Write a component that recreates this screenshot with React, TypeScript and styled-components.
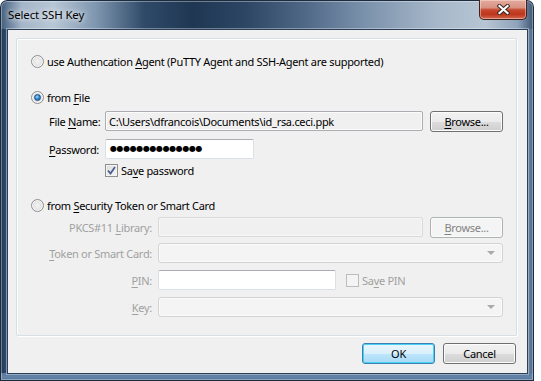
import React from 'react'
import styled, { createGlobalStyle, css } from 'styled-components'

const UI_FONT = `"Noto Sans", "Open Sans", sans-serif`

const GlobalStyle = createGlobalStyle`
  html, body {
    margin: 0;
    padding: 0;
    background: #ffffff;
  }
  body {
    font-family: ${UI_FONT};
    font-size: 11px;
    letter-spacing: -0.3px;
    color: #000;
  }
`

const Window = styled.div`
  width: 534px;
  height: 381px;
  box-sizing: border-box;
  display: flex;
  flex-direction: column;
  padding: 0 6px 7px 7px;
  border-radius: 7px 7px 0 0;
  background:
    linear-gradient(180deg, transparent 373px, #56769a 373px, #6485a8 377px, #4b6a8c 381px),
    linear-gradient(90deg, #1f3654 0, #2c4a6c 6px, transparent 7px, transparent 527px, #6f8aa8 527px, #4a6584 534px) 0 29px / 100% 352px no-repeat,
    linear-gradient(90deg, #3e5a7a 0%, #a3b5c8 4%, #b8c7d6 10%, #7f96b0 18%, #2f4a68 27%, #1f3752 36%, #2c4664 46%, #4f6886 57%, #7a91ab 68%, #a7b8ca 82%, #b7c5d4 91%, #8da2ba 97%, #3a5370 100%);
  box-shadow: inset 0 0 0 1px #1c2b3d, inset 0 0 0 2px rgba(255, 255, 255, 0.35);
`

const TitleBar = styled.div`
  height: 29px;
  flex-shrink: 0;
  display: flex;
  align-items: flex-start;
`

const Title = styled.span`
  padding: 7px 0 0 1px;
  font-size: 11.5px;
  line-height: 15px;
  letter-spacing: -0.15px;
  text-shadow: 0 0 5px rgba(255, 255, 255, 0.9), 0 0 10px rgba(255, 255, 255, 0.6);
`

const CloseButton = styled.div`
  margin-left: auto;
  margin-right: 1px;
  width: 48px;
  height: 20px;
  box-sizing: border-box;
  border: 1px solid #40231e;
  border-top: none;
  border-radius: 0 0 5px 5px;
  background: linear-gradient(180deg, #e4ab9f 0%, #d89282 40%, #c6482f 52%, #bd351c 75%, #d2694f 100%);
  box-shadow: inset 0 0 0 1px rgba(255, 230, 220, 0.45);
  display: flex;
  align-items: center;
  justify-content: center;
`

const Client = styled.div`
  flex: 1;
  display: flex;
  flex-direction: column;
  border: 1px solid #2b4058;
  background: #f0f0f0;
  box-shadow: 0 0 0 1px rgba(255, 255, 255, 0.35);
`

const Panel = styled.div`
  margin: 8px 10px 0 8px;
  height: 298px;
  box-sizing: border-box;
  padding: 12px 13px 0 14px;
  border: 1px solid #d5dfe5;
  border-radius: 2px;
  box-shadow: inset 1px 1px 0 #fff, 1px 1px 0 #fff;
  display: flex;
  flex-direction: column;
`

const Row = styled.div<{ $top: number; $indent?: number }>`
  height: 20px;
  margin-top: ${p => p.$top}px;
  padding-left: ${p => p.$indent ?? 0}px;
  display: flex;
  align-items: center;
  flex-shrink: 0;
`

const Text = styled.span<{ $disabled?: boolean }>`
  font-size: 11px;
  line-height: 15px;
  white-space: nowrap;
  color: ${p => (p.$disabled ? '#a0a0a0' : '#000')};
`

const Label = styled(Text)<{ $width: number; $right?: boolean }>`
  width: ${p => p.$width}px;
  flex-shrink: 0;
  box-sizing: border-box;
  text-align: ${p => (p.$right ? 'right' : 'left')};
  padding-right: ${p => (p.$right ? 6 : 0)}px;
`

const Key = styled.span`
  text-decoration: underline;
  text-underline-offset: 2px;
`

const Radio = styled.span<{ $checked?: boolean }>`
  width: 13px;
  height: 13px;
  box-sizing: border-box;
  border-radius: 50%;
  border: 1px solid #8e8f8f;
  background: radial-gradient(circle at 50% 50%, #f4f4f4 0%, #e2e2e2 55%, #cfcfcf 100%);
  box-shadow: inset 0 0 0 1px #f8f8f8;
  margin-right: 3px;
  position: relative;
  flex-shrink: 0;
  ${p =>
    p.$checked &&
    css`
      &::after {
        content: '';
        position: absolute;
        left: 2px;
        top: 2px;
        width: 7px;
        height: 7px;
        box-sizing: border-box;
        border-radius: 50%;
        border: 1px solid #1b4d82;
        background: radial-gradient(circle at 40% 35%, #a9def9 0%, #3b95d8 40%, #11589f 100%);
      }
    `}
`

const Check = styled.span<{ $disabled?: boolean; $gap?: number }>`
  width: 13px;
  height: 13px;
  box-sizing: border-box;
  border: 1px solid ${p => (p.$disabled ? '#bcbcbc' : '#8e8f8f')};
  background: ${p =>
    p.$disabled ? '#f4f4f4' : 'linear-gradient(135deg, #dcdcdc 0%, #f6f6f6 100%)'};
  box-shadow: inset 0 0 0 1px #f4f4f4;
  display: flex;
  align-items: center;
  justify-content: center;
  margin-left: ${p => p.$gap ?? 0}px;
  margin-right: 3px;
  flex-shrink: 0;
`

const Field = styled.div<{ $kind: 'normal' | 'readonly' | 'disabled'; $width?: number }>`
  height: 20px;
  box-sizing: border-box;
  ${p => (p.$width ? css`width: ${p.$width}px;` : css`flex: 1;`)}
  flex-shrink: 0;
  border-radius: 2px;
  display: flex;
  align-items: center;
  padding-left: 3px;
  overflow: hidden;
  ${p =>
    p.$kind === 'normal' &&
    css`
      background: #fff;
      border: 1px solid #dbdfe6;
      border-top-color: #abadb3;
    `}
  ${p =>
    p.$kind === 'readonly' &&
    css`
      background: #f0f0f0;
      border: 1px solid #abadb3;
      box-shadow: inset 0 0 0 1px #fbfbfb;
    `}
  ${p =>
    p.$kind === 'disabled' &&
    css`
      background: #f0f0f0;
      border: 1px solid #d9d9d9;
      box-shadow: inset 0 0 0 1px #f6f6f6;
    `}
`

const Dots = styled.span`
  font-family: "DejaVu Sans", sans-serif;
  font-size: 8px;
  letter-spacing: -0.4px;
  line-height: 12px;
  padding-left: 1px;
`

const Combo = styled.div`
  flex: 1;
  height: 20px;
  box-sizing: border-box;
  border: 1px solid #d3d3d3;
  border-radius: 3px;
  background: #f4f4f4;
  box-shadow: inset 0 0 0 1px #fafafa;
  display: flex;
  align-items: center;
  justify-content: flex-end;
  padding-right: 7px;
`

const Arrow = styled.span`
  width: 0;
  height: 0;
  border-left: 4px solid transparent;
  border-right: 4px solid transparent;
  border-top: 4px solid #a9a9a9;
`

const Button = styled.div<{ $variant?: 'default' | 'disabled'; $gap?: number }>`
  width: 73px;
  height: 21px;
  margin-left: ${p => p.$gap ?? 0}px;
  box-sizing: border-box;
  flex-shrink: 0;
  border-radius: 3px;
  display: flex;
  align-items: center;
  justify-content: center;
  font-size: 11px;
  line-height: 15px;
  border: 1px solid #707070;
  background: linear-gradient(180deg, #f2f2f2 0%, #ebebeb 50%, #dddddd 51%, #cfcfcf 100%);
  box-shadow: inset 0 0 0 1px #fcfcfc;
  color: #000;
  ${p =>
    p.$variant === 'default' &&
    css`
      border-color: #3c7fb1;
      background: linear-gradient(180deg, #eaf6fd 0%, #d9f0fc 50%, #bee6fd 51%, #a7d9f5 100%);
      box-shadow: inset 0 0 0 1px #48d0f5;
    `}
  ${p =>
    p.$variant === 'disabled' &&
    css`
      border-color: #adb2b5;
      background: #f4f4f4;
      box-shadow: inset 0 0 0 1px #fbfbfb;
      color: #838383;
    `}
`

const ButtonBar = styled.div`
  display: flex;
  justify-content: flex-end;
  padding: 7px 11px 0 0;
`

const CloseGlyph = () => (
  <svg width="13" height="11" viewBox="0 0 13 11">
    <path d="M2.5 2 L10.5 9 M10.5 2 L2.5 9" stroke="#3b2622" strokeWidth="4.2" strokeLinecap="square" />
    <path d="M2.5 2 L10.5 9 M10.5 2 L2.5 9" stroke="#ffffff" strokeWidth="2.2" strokeLinecap="square" />
  </svg>
)

const CheckMark = () => (
  <svg width="9" height="9" viewBox="0 0 9 9">
    <path d="M1 4.5 L3.5 7.5 L8 1" fill="none" stroke="#4a5f8e" strokeWidth="1.8" />
  </svg>
)

const App = () => {
  return (
    <>
      <GlobalStyle />
      <Window>
        <TitleBar>
          <Title>Select SSH Key</Title>
          <CloseButton>
            <CloseGlyph />
          </CloseButton>
        </TitleBar>
        <Client>
          <Panel>
            <Row $top={0}>
              <Radio />
              <Text>
                use Authencation <Key>A</Key>gent (PuTTY Agent and SSH-Agent are supported)
              </Text>
            </Row>

            <Row $top={16}>
              <Radio $checked />
              <Text>
                from <Key>F</Key>ile
              </Text>
            </Row>
            <Row $top={4} $indent={18}>
              <Label $width={56}>
                File <Key>N</Key>ame:
              </Label>
              <Field $kind="readonly">
                <Text>C:\Users\dfrancois\Documents\id_rsa.ceci.ppk</Text>
              </Field>
              <Button $gap={7}>
                <span>
                  <Key>B</Key>rowse...
                </span>
              </Button>
            </Row>
            <Row $top={8} $indent={18}>
              <Label $width={56}>
                <Key>P</Key>assword:
              </Label>
              <Field $kind="normal" $width={149}>
                <Dots>●●●●●●●●●●●●●●</Dots>
              </Field>
            </Row>
            <Row $top={1} $indent={74}>
              <Check>
                <CheckMark />
              </Check>
              <Text>
                Sa<Key>v</Key>e password
              </Text>
            </Row>

            <Row $top={15}>
              <Radio />
              <Text>
                from <Key>S</Key>ecurity Token or Smart Card
              </Text>
            </Row>
            <Row $top={2} $indent={18}>
              <Label $width={109} $right $disabled>
                PKCS#11 <Key>L</Key>ibrary:
              </Label>
              <Field $kind="disabled" />
              <Button $gap={7} $variant="disabled">
                <span>
                  <Key>B</Key>rowse...
                </span>
              </Button>
            </Row>
            <Row $top={6} $indent={18}>
              <Label $width={109} $right $disabled>
                <Key>T</Key>oken or Smart Card:
              </Label>
              <Combo>
                <Arrow />
              </Combo>
            </Row>
            <Row $top={7} $indent={18}>
              <Label $width={109} $right $disabled>
                <Key>P</Key>IN:
              </Label>
              <Field $kind="normal" $width={178} />
              <Check $disabled $gap={10} />
              <Text $disabled>
                Sa<Key>v</Key>e PIN
              </Text>
            </Row>
            <Row $top={7} $indent={18}>
              <Label $width={109} $right $disabled>
                <Key>K</Key>ey:
              </Label>
              <Combo>
                <Arrow />
              </Combo>
            </Row>
          </Panel>
          <ButtonBar>
            <Button $variant="default">OK</Button>
            <Button $gap={8}>Cancel</Button>
          </ButtonBar>
        </Client>
      </Window>
    </>
  )
}

export default App
